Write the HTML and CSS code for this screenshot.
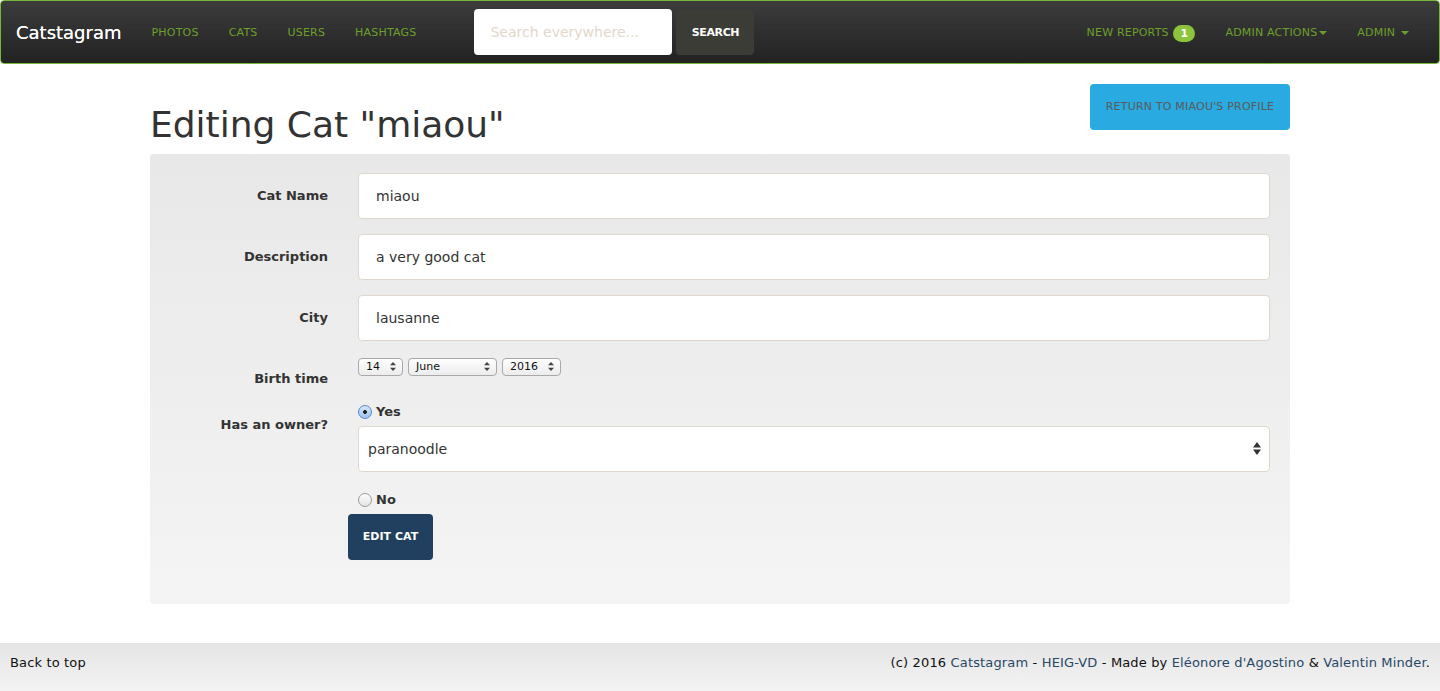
FILE: index.html
```html
<!DOCTYPE html>
<html lang="en">
<head>
<meta charset="utf-8">
<title>Editing Cat "miaou" - Catstagram</title>
<link rel="stylesheet" href="styles.css">
</head>
<body>
<nav class="navbar">
  <a class="brand" href="#">Catstagram</a>
  <ul class="nav">
    <li><a href="#">Photos</a></li>
    <li><a href="#">Cats</a></li>
    <li><a href="#">Users</a></li>
    <li><a href="#">Hashtags</a></li>
  </ul>
  <form class="search">
    <input class="search-input" type="text" placeholder="Search everywhere...">
    <button class="search-btn" type="button">Search</button>
  </form>
  <ul class="nav nav-right">
    <li><a href="#">New reports <span class="badge">1</span></a></li>
    <li><a href="#">Admin actions<span class="caret"></span></a></li>
    <li><a href="#">Admin <span class="caret"></span></a></li>
  </ul>
</nav>

<main class="container">
  <div class="page-header">
    <h1>Editing Cat "miaou"</h1>
    <a class="btn-return" href="#">Return to miaou's profile</a>
  </div>

  <form class="panel">
    <label class="label">Cat Name</label>
    <div class="field"><div class="input">miaou</div></div>

    <label class="label">Description</label>
    <div class="field"><div class="input">a very good cat</div></div>

    <label class="label">City</label>
    <div class="field"><div class="input">lausanne</div></div>

    <label class="label label-birth">Birth time</label>
    <div class="field date-row">
      <div class="mini-select s-day"><span>14</span><svg width="6" height="9" viewBox="0 0 6 9"><path d="M3 0L6 3.2H0z M3 9L0 5.8H6z" fill="#444"/></svg></div>
      <div class="mini-select s-month"><span>June</span><svg width="6" height="9" viewBox="0 0 6 9"><path d="M3 0L6 3.2H0z M3 9L0 5.8H6z" fill="#444"/></svg></div>
      <div class="mini-select s-year"><span>2016</span><svg width="6" height="9" viewBox="0 0 6 9"><path d="M3 0L6 3.2H0z M3 9L0 5.8H6z" fill="#444"/></svg></div>
    </div>

    <label class="label label-owner">Has an owner?</label>
    <div class="field owner">
      <div class="radio-line"><span class="radio checked"></span><span class="radio-text">Yes</span></div>
      <div class="input select-big"><span>paranoodle</span><svg width="8" height="13" viewBox="0 0 8 13"><path d="M4 0L8 5.5H0z M4 13L0 7.5H8z" fill="#333"/></svg></div>
      <div class="radio-line radio-no"><span class="radio"></span><span class="radio-text">No</span></div>
      <button class="btn-edit" type="button">Edit cat</button>
    </div>
  </form>
</main>

<footer class="footer">
  <a class="back" href="#">Back to top</a>
  <p class="credits">(c) 2016 <a href="#">Catstagram</a> - <a href="#">HEIG-VD</a> - Made by <a href="#">Eléonore d'Agostino</a> &amp; <a href="#">Valentin Minder</a>.</p>
</footer>
</body>
</html>
```

FILE: styles.css
```css
* { box-sizing: border-box; }
html, body { margin: 0; padding: 0; }
body {
  font-family: "DejaVu Sans", Verdana, sans-serif;
  font-size: 13px;
  color: #333;
  background: #fff;
}
a { text-decoration: none; }

/* navbar */
.navbar {
  display: flex;
  align-items: center;
  height: 64px;
  border: 1px solid #74b83a;
  border-radius: 4px;
  background: linear-gradient(#3c3c3c, #222);
}
.brand {
  color: #fff;
  font-size: 18px;
  padding: 2px 15px 0;
  line-height: 62px;
  text-shadow: 0 0 0.4px #fff;
}
.nav {
  display: flex;
  list-style: none;
  margin: 0;
  padding: 0;
}
.nav a {
  display: block;
  padding: 2px 15px 0;
  color: #6ca02c;
  font-size: 11px;
  letter-spacing: 0.2px;
  text-transform: uppercase;
  line-height: 60px;
}
.search {
  display: flex;
  gap: 4px;
  margin-left: 43px;
}
.search-input {
  width: 198px;
  height: 46px;
  border: 0;
  border-radius: 4px;
  padding: 0 16px;
  font-family: inherit;
  font-size: 14px;
  background: #fff;
  outline: none;
}
.search-input::placeholder { color: #e2d8cb; }
.search-btn {
  width: 78px;
  height: 46px;
  border: 0;
  border-radius: 4px;
  background: #3c3c37;
  color: #fff;
  font-family: inherit;
  font-size: 11px;
  font-weight: bold;
  text-transform: uppercase;
  letter-spacing: -0.4px;
  padding-top: 1px;
}
.nav-right {
  margin-left: auto;
  padding-right: 15px;
}
.badge {
  display: inline-block;
  min-width: 22px;
  height: 17px;
  line-height: 17px;
  padding: 0 6px;
  border-radius: 9px;
  background: #8cc43c;
  color: #fff;
  font-size: 11px;
  font-weight: bold;
  text-align: center;
  vertical-align: middle;
  margin-left: 1px;
  letter-spacing: 0;
}
.caret {
  display: inline-block;
  width: 0;
  height: 0;
  margin-left: 2px;
  vertical-align: middle;
  border-top: 4px solid #6ca02c;
  border-left: 4px solid transparent;
  border-right: 4px solid transparent;
}

/* content */
.container {
  width: 1140px;
  margin: 0 auto;
  padding-top: 20px;
}
.page-header {
  display: flex;
  justify-content: space-between;
  align-items: flex-start;
}
h1 {
  margin: 21px 0 9px;
  font-size: 36px;
  font-weight: normal;
  line-height: 1.1;
  color: #333;
}
.btn-return {
  display: block;
  width: 200px;
  height: 46px;
  line-height: 46px;
  text-align: center;
  background: #29aae0;
  color: #5a5a5a;
  font-size: 11px;
  letter-spacing: 0.2px;
  text-transform: uppercase;
  border-radius: 4px;
}

.panel {
  display: grid;
  grid-template-columns: 178px 1fr;
  column-gap: 30px;
  row-gap: 15px;
  padding: 19px 20px 44px 0;
  background: linear-gradient(#e8e8e8, #f4f4f4);
  border-radius: 4px;
}
.label {
  text-align: right;
  font-weight: bold;
  padding-top: 15px;
  line-height: 16px;
}
.input {
  height: 46px;
  display: flex;
  align-items: center;
  padding: 1px 17px 0;
  background: #fff;
  border: 1px solid #e0d8cc;
  border-radius: 4px;
  font-size: 14px;
  color: #333;
}
.date-row {
  display: flex;
  gap: 5px;
  height: 31px;
  padding-top: 2px;
}
.mini-select {
  display: flex;
  align-items: center;
  justify-content: space-between;
  height: 18px;
  padding: 0 6px 0 7px;
  border: 1px solid #a9a9a9;
  border-radius: 4px;
  background: linear-gradient(#fff, #ececec);
  font-size: 11px;
  color: #111;
}
.s-day { width: 45px; }
.s-month { width: 89px; }
.s-year { width: 59px; }

.owner { display: flex; flex-direction: column; align-items: flex-start; }
.radio-line {
  display: flex;
  align-items: center;
  height: 20px;
  margin-bottom: 4px;
}
.radio {
  width: 14px;
  height: 14px;
  border-radius: 50%;
  border: 1px solid #9a9a9a;
  background: linear-gradient(#fdfdfd, #e4e4e4);
  margin-right: 4px;
}
.radio.checked {
  border-color: #5a86c6;
  background: radial-gradient(circle, #222 0, #222 1.6px, transparent 2.2px), linear-gradient(#d7e7fb, #9cc1ef);
}
.radio-text { font-weight: bold; font-size: 13px; }
.select-big {
  align-self: stretch;
  justify-content: space-between;
  padding: 0 8px 0 9px;
}
.radio-no { margin-top: 20px; margin-bottom: 6px; height: 16px; }
.btn-edit {
  margin-left: -10px;
  width: 85px;
  height: 46px;
  border: 0;
  border-radius: 4px;
  background: #213f5e;
  color: #fff;
  font-family: inherit;
  font-size: 11px;
  font-weight: bold;
  text-transform: uppercase;
}

/* footer */
.footer {
  display: flex;
  justify-content: space-between;
  align-items: flex-start;
  height: 48px;
  margin-top: 39px;
  padding: 12px 10px 0;
  line-height: 16px;
  background: linear-gradient(#e5e5e5, #f3f3f3);
  font-size: 13px;
  letter-spacing: 0.15px;
  color: #111;
}
.back { color: #111; }
.credits { margin: 0; color: #111; }
.credits a { color: #284866; }
```
